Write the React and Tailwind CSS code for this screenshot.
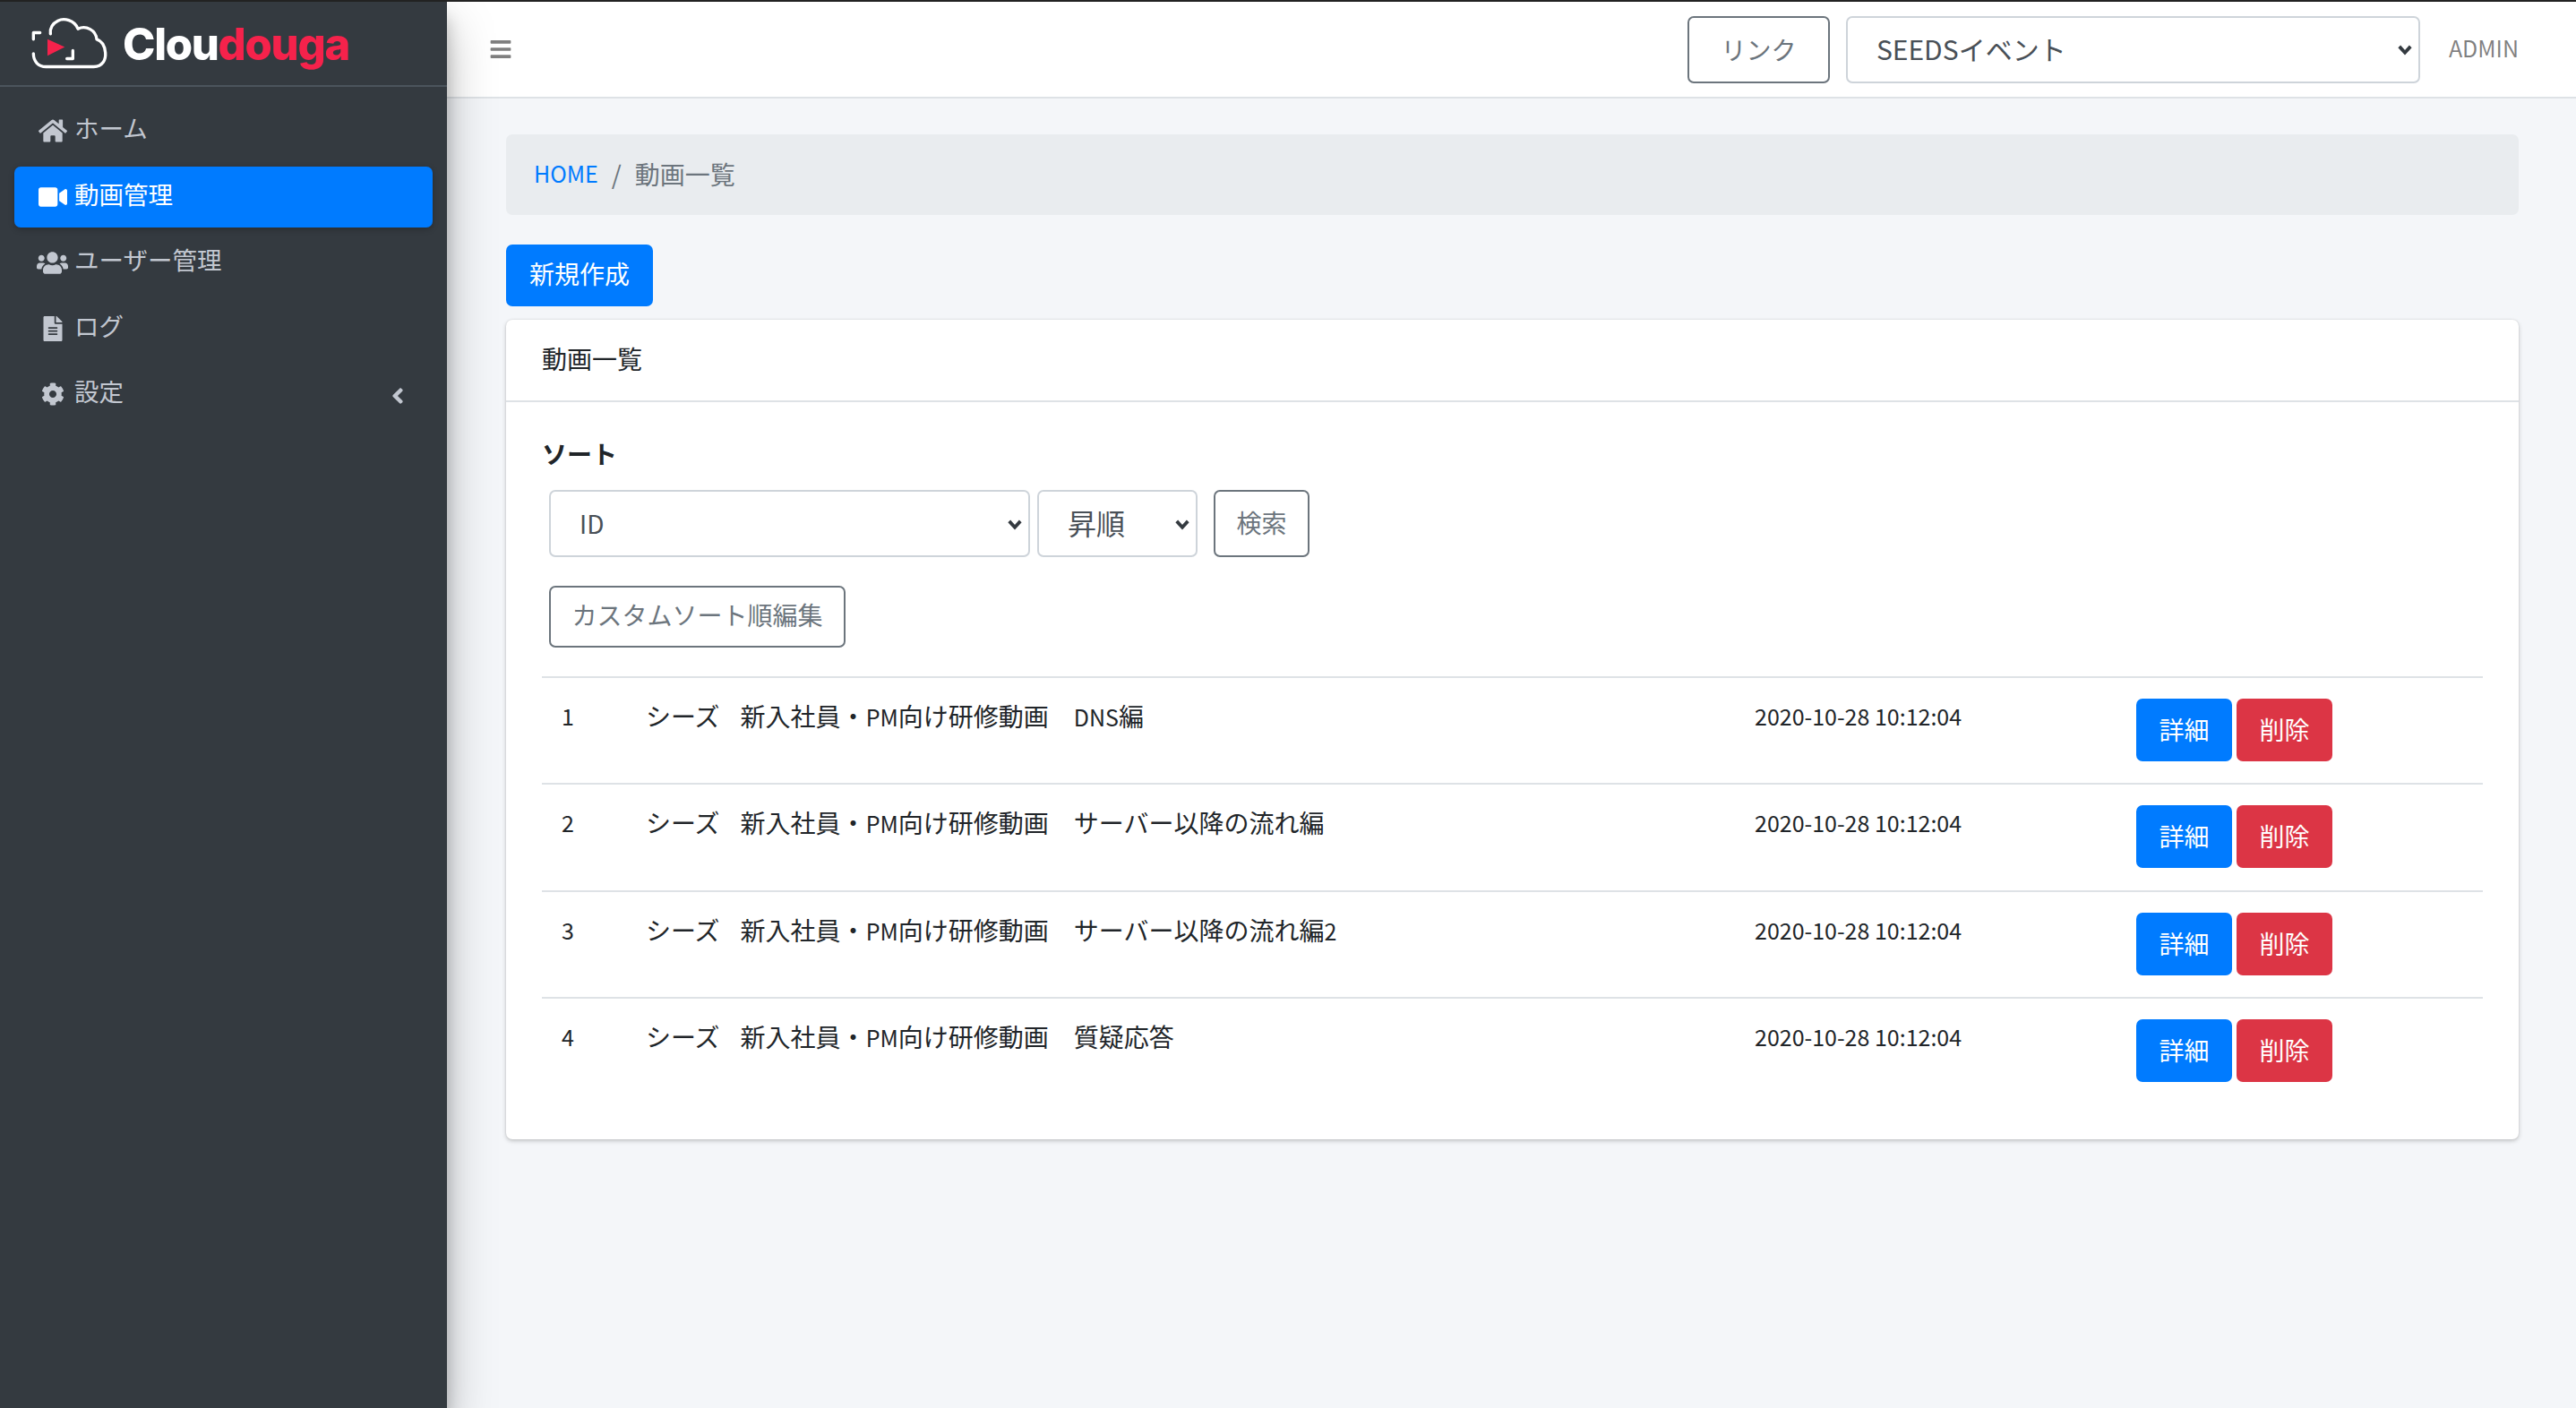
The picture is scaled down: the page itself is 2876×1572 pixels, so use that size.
import React from "react";
import {
  FaHome,
  FaVideo,
  FaUsers,
  FaFileAlt,
  FaCog,
  FaAngleLeft,
  FaBars,
} from "react-icons/fa";

const menu = [
  { label: "ホーム", icon: <FaHome size={32} /> },
  { label: "動画管理", icon: <FaVideo size={32} />, active: true },
  { label: "ユーザー管理", icon: <FaUsers size={35} /> },
  { label: "ログ", icon: <FaFileAlt size={28} /> },
  { label: "設定", icon: <FaCog size={26} />, arrow: true },
];

const Latin = ({ children }) => <span className="text-[25px]">{children}</span>;

const rows = [
  { id: 1, title: <><Latin>DNS</Latin>編</> },
  { id: 2, title: "サーバー以降の流れ編" },
  { id: 3, title: <>サーバー以降の流れ編<Latin>2</Latin></> },
  { id: 4, title: "質疑応答" },
];

function Chevron() {
  return (
    <svg
      viewBox="0 0 16 16"
      className="absolute right-[7px] top-1/2 h-[20px] w-[20px] -translate-y-1/2 pointer-events-none"
    >
      <path d="M3 5.5 L8 11 L13 5.5" fill="none" stroke="#343a40" strokeWidth="3" />
    </svg>
  );
}

function SelectBox({ value, width, textClass }) {
  return (
    <div className={`relative h-[75px] ${width}`}>
      <select
        defaultValue={value}
        className={`h-full w-full appearance-none rounded-[7px] border-2 border-[#ced4da] bg-white text-[#495057] outline-none ${textClass}`}
      >
        <option>{value}</option>
      </select>
      <Chevron />
    </div>
  );
}

function Logo() {
  return (
    <div className="flex h-[93px] items-start gap-[14px] pl-[33px] pt-[15px]">
      <svg viewBox="100 50 270 185" className="h-[62px] w-[90px] shrink-0">
        <g fill="none" stroke="#fff" strokeWidth="10" strokeLinecap="round" strokeLinejoin="round">
          <path d="M135 108 H113 V130" />
          <path d="M113 178 C113 205 130 222 155 222 H315 C345 222 356 198 354 175 C352 150 340 135 325 130 C322 100 290 82 262 95 C250 65 215 58 195 68 C175 78 168 95 170 112" />
          <path d="M245 168 V195 H225" />
        </g>
        <path d="M160 130 L218 156 L160 185 Z" fill="#f5224b" />
      </svg>
      <div className="mt-[3px] font-['Inter',sans-serif] text-[49px] leading-[60px] font-extrabold tracking-[-1.3px]">
        <span className="text-white">Clou</span>
        <span className="text-[#f5224b]">douga</span>
      </div>
    </div>
  );
}

function Sidebar() {
  return (
    <aside className="relative z-10 w-[499px] shrink-0 bg-[#343a40] shadow-[0_26px_51px_rgba(0,0,0,0.25),0_18px_18px_rgba(0,0,0,0.22)]">
      <Logo />
      <div className="border-t-2 border-[#4b545c]" />
      <nav className="flex flex-col gap-[5.5px] px-[16px] pt-[15px]">
        {menu.map((m) => (
          <div
            key={m.label}
            className={`flex h-[68px] items-center rounded-[7px] ${
              m.active
                ? "bg-[#007bff] text-white shadow-[0_2px_6px_rgba(0,0,0,0.25)]"
                : "text-[#c2c7d0]"
            }`}
          >
            <span className="flex w-[67px] shrink-0 justify-center pl-[18px]">{m.icon}</span>
            <span className="pb-[6px] text-[27.5px] leading-none">{m.label}</span>
            {m.arrow && (
              <span className="ml-auto pr-[25px] pt-[4px]">
                <FaAngleLeft size={28} />
              </span>
            )}
          </div>
        ))}
      </nav>
    </aside>
  );
}

function Header() {
  return (
    <header className="flex h-[108px] items-center border-b-2 border-[#dee2e6] bg-white pl-[47px] pr-[64px]">
      <FaBars size={26} className="text-[#00000080]" />
      <div className="ml-auto flex items-center">
        <button className="h-[75px] w-[159px] rounded-[7px] border-2 border-[#6c757d] text-[28px] text-[#6c757d]">
          リンク
        </button>
        <div className="ml-[18px]">
          <SelectBox value="SEEDSイベント" width="w-[641px]" textClass="pl-[32px] pb-[2px] text-[30px]" />
        </div>
        <span className="ml-[32px] pb-[2px] text-[25px] text-[#00000080]">ADMIN</span>
      </div>
    </header>
  );
}

function Row({ row }) {
  return (
    <div className="grid h-[119.3px] grid-cols-[116px_1238px_426px_1fr] border-t-2 border-[#dee2e6] text-[#212529]">
      <div className="pl-[22px] pt-[22px] text-[25px] leading-[40px]">{row.id}</div>
      <div className="pt-[22px] text-[28px] leading-[40px] whitespace-nowrap">
        シーズ<span className="text-[23px]">　</span>新入社員・<Latin>PM</Latin>向け研修動画　{row.title}
      </div>
      <div className="pt-[22px] text-[25px] leading-[40px]">2020-10-28 10:12:04</div>
      <div className="flex gap-[5px] pt-[23px]">
        <button className="h-[70px] w-[107px] rounded-[7px] bg-[#007bff] pb-[2px] text-[28px] text-white">詳細</button>
        <button className="h-[70px] w-[107px] rounded-[7px] bg-[#dc3545] pb-[2px] text-[28px] text-white">削除</button>
      </div>
    </div>
  );
}

export default function App() {
  return (
    <div className="flex h-[1572px] w-[2876px] overflow-hidden border-t-2 border-[#222] bg-[#f4f6f9] font-['Noto_Sans_CJK_JP','Noto_Sans',sans-serif]">
      <Sidebar />
      <main className="flex min-w-0 flex-1 flex-col">
        <Header />
        <div className="pl-[66px] pr-[64px] pt-[40px]">
          <div className="flex h-[90px] items-center rounded-[7px] bg-[#e9ecef] px-[31px] pb-[3px] text-[28px]">
            <span className="text-[25px] text-[#007bff]">HOME</span>
            <span className="mx-[15px] text-[#6c757d]">/</span>
            <span className="text-[#6c757d]">動画一覧</span>
          </div>
          <button className="mt-[33px] block h-[69px] w-[164px] rounded-[7px] bg-[#007bff] pb-[5px] text-[28px] text-white">
            新規作成
          </button>
          <section className="mt-[15px] h-[915px] rounded-[7px] bg-white shadow-[0_0_2px_rgba(0,0,0,0.125),0_2px_5px_rgba(0,0,0,0.2)]">
            <div className="flex h-[92px] items-center border-b-2 border-[#dee2e6] px-[40px] pb-[5px] text-[28px] text-[#212529]">
              動画一覧
            </div>
            <div className="px-[40px] pt-[37px]">
              <div className="text-[28px] leading-[40px] font-bold text-[#212529]">ソート</div>
              <div className="ml-[8px] mt-[21px] flex items-center">
                <SelectBox value="ID" width="w-[537px]" textClass="pl-[32px] pb-[2px] text-[28px]" />
                <div className="ml-[8px]">
                  <SelectBox value="昇順" width="w-[179px]" textClass="pl-[32px] pb-[4px] text-[32px]" />
                </div>
                <button className="ml-[18px] h-[75px] w-[107px] rounded-[7px] border-2 border-[#6c757d] pb-[4px] text-[28px] text-[#6c757d]">
                  検索
                </button>
              </div>
              <button className="ml-[8px] mt-[32px] block h-[69px] w-[331px] rounded-[7px] border-2 border-[#6c757d] pb-[5px] text-[28px] text-[#6c757d]">
                カスタムソート順編集
              </button>
              <div className="mt-[32px]">
                {rows.map((r) => (
                  <Row key={r.id} row={r} />
                ))}
              </div>
            </div>
          </section>
        </div>
      </main>
    </div>
  );
}
